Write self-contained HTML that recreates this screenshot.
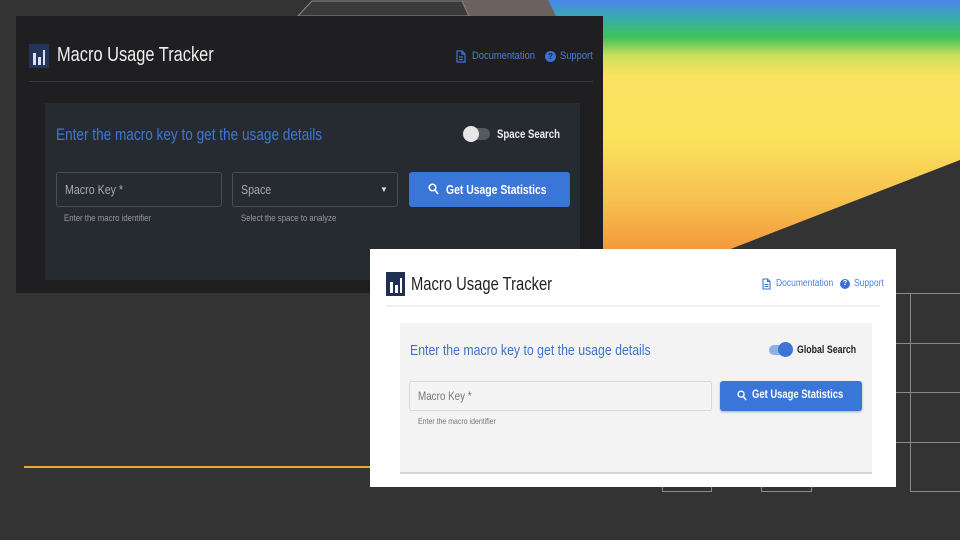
<!DOCTYPE html>
<html><head><meta charset="utf-8"><style>
*{margin:0;padding:0;box-sizing:border-box}
body{width:960px;height:540px;background:#333333;position:relative;overflow:hidden;font-family:"Liberation Sans",sans-serif}
.abs{position:absolute}
.grad{position:absolute;left:0;top:0;width:960px;height:540px}
.dark{left:16px;top:16px;width:587px;height:277px;background:#1f1f21}
.light{left:370px;top:249px;width:526px;height:238px;background:#fff}
.n{white-space:nowrap;transform-origin:left}
</style></head><body>
<svg class="grad" width="960" height="540">
<defs><linearGradient id="g" x1="0" y1="0" x2="0" y2="250" gradientUnits="userSpaceOnUse">
<stop offset="0" stop-color="#4a86e8"/><stop offset="0.07" stop-color="#3aaab0"/><stop offset="0.15" stop-color="#3cc35a"/><stop offset="0.22" stop-color="#c9df5a"/><stop offset="0.3" stop-color="#fae360"/><stop offset="0.55" stop-color="#fce35e"/><stop offset="0.8" stop-color="#f7c04f"/><stop offset="1" stop-color="#f29a3c"/></linearGradient></defs>
<polygon points="548,0 960,0 960,160 728,250 560,250" fill="url(#g)"/>
<polygon points="462,0 548,0 556,16 469,16" fill="#6b625d"/>
<polygon points="298,16 312,1 462,1 469,16" fill="#3a3a3a" stroke="#8a8a8a" stroke-width="1"/>
<line x1="24" y1="467" x2="372" y2="467" stroke="#e9a840" stroke-width="2"/>
<g stroke="#8a8a8a" stroke-width="1" fill="none">
<line x1="896" y1="293.5" x2="960" y2="293.5"/><line x1="896" y1="343.5" x2="960" y2="343.5"/>
<line x1="896" y1="392.5" x2="960" y2="392.5"/><line x1="896" y1="442.5" x2="960" y2="442.5"/>
<line x1="910" y1="491.5" x2="960" y2="491.5"/><line x1="910.5" y1="293" x2="910.5" y2="491"/>
<polyline points="662.5,487 662.5,491.5 711.5,491.5 711.5,487"/>
<polyline points="761.5,487 761.5,491.5 811.5,491.5 811.5,487"/>
</g>
</svg>

<div class="abs dark">
 <div class="abs" style="left:13px;top:28px;width:20px;height:24px;background:#24335a"></div>
 <div class="abs" style="left:17px;top:37px;width:3px;height:12px;background:#dde"></div>
 <div class="abs" style="left:22px;top:41px;width:3px;height:8px;background:#dde"></div>
 <div class="abs" style="left:27px;top:34px;width:2px;height:15px;background:#dde"></div>
 <div class="abs n" style="left:41px;top:28px;color:#f0f0f0;font-size:20px;transform:scaleX(0.82)">Macro Usage Tracker</div>
 <svg class="abs" style="left:440px;top:34px" width="10" height="13" viewBox="0 0 10 13"><path d="M1 1h5l3 3v8H1z M6 1v3h3 M3 7h4 M3 9.5h4" fill="none" stroke="#3f72d0" stroke-width="1.2"/></svg>
 <div class="abs n" style="left:456px;top:34px;color:#4f7fd8;font-size:11px;transform:scaleX(0.85)">Documentation</div>
 <div class="abs" style="left:529px;top:35px;width:11px;height:11px;border-radius:50%;background:#3c72d6;color:#1f1f21;font-size:8px;text-align:center;line-height:11px;font-weight:bold">?</div>
 <div class="abs n" style="left:544px;top:34px;color:#4f7fd8;font-size:11px;transform:scaleX(0.85)">Support</div>
 <div class="abs" style="left:13px;top:65px;width:564px;height:1px;background:#3a3a3e"></div>
 <div class="abs" style="left:29px;top:87px;width:535px;height:177px;background:#262a31">
  <div class="abs n" style="left:11px;top:22px;color:#3f78d4;font-size:17px;transform:scaleX(0.8)">Enter the macro key to get the usage details</div>
  <div class="abs" style="left:419px;top:25px;width:26px;height:12px;border-radius:6px;background:#55585e"></div>
  <div class="abs" style="left:418px;top:23px;width:16px;height:16px;border-radius:50%;background:#e6e6e6"></div>
  <div class="abs n" style="left:452px;top:24px;color:#eee;font-size:12px;font-weight:bold;transform:scaleX(0.8)">Space Search</div>
  <div class="abs" style="left:11px;top:69px;width:166px;height:35px;border:1px solid #4a4d53;border-radius:3px"></div>
  <div class="abs n" style="left:20px;top:79px;color:#aaa;font-size:13px;transform:scaleX(0.82)">Macro Key *</div>
  <div class="abs n" style="left:19px;top:110px;color:#999;font-size:9.5px;transform:scaleX(0.82)">Enter the macro identifier</div>
  <div class="abs" style="left:187px;top:69px;width:166px;height:35px;border:1px solid #4a4d53;border-radius:3px"></div>
  <div class="abs n" style="left:196px;top:79px;color:#aaa;font-size:13px;transform:scaleX(0.82)">Space</div>
  <div class="abs" style="left:335px;top:82px;color:#ddd;font-size:8px">▼</div>
  <div class="abs n" style="left:196px;top:110px;color:#999;font-size:9.5px;transform:scaleX(0.82)">Select the space to analyze</div>
  <div class="abs" style="left:364px;top:69px;width:161px;height:35px;background:#3a76d8;border-radius:3px"></div>
  <svg class="abs" style="left:383px;top:80px" width="11" height="12" viewBox="0 0 11 12"><circle cx="4.5" cy="4.5" r="3.3" fill="none" stroke="#fff" stroke-width="1.5"/><path d="M7 7l3 4" stroke="#fff" stroke-width="1.6"/></svg>
  <div class="abs n" style="left:401px;top:79px;color:#fff;font-size:13px;font-weight:bold;transform:scaleX(0.8)">Get Usage Statistics</div>
 </div>
</div>

<div class="abs light">
 <div class="abs" style="left:16px;top:23px;width:19px;height:24px;background:#1f2f55"></div>
 <div class="abs" style="left:20px;top:33px;width:3px;height:11px;background:#fff"></div>
 <div class="abs" style="left:25px;top:36px;width:3px;height:8px;background:#fff"></div>
 <div class="abs" style="left:30px;top:29px;width:2px;height:15px;background:#fff"></div>
 <div class="abs n" style="left:41px;top:25px;color:#222;font-size:18px;transform:scaleX(0.82)">Macro Usage Tracker</div>
 <svg class="abs" style="left:392px;top:29px" width="9" height="12" viewBox="0 0 9 12"><path d="M1 1h4.5l2.5 2.5V11H1z M5.5 1v2.5H8 M2.5 6.5h4 M2.5 8.5h4" fill="none" stroke="#3f72d0" stroke-width="1.1"/></svg>
 <div class="abs n" style="left:406px;top:29px;color:#4f7fd8;font-size:10px;transform:scaleX(0.85)">Documentation</div>
 <div class="abs" style="left:470px;top:30px;width:10px;height:10px;border-radius:50%;background:#3c72d6;color:#fff;font-size:7px;text-align:center;line-height:10px;font-weight:bold">?</div>
 <div class="abs n" style="left:484px;top:29px;color:#4f7fd8;font-size:10px;transform:scaleX(0.85)">Support</div>
 <div class="abs" style="left:16px;top:56px;width:494px;height:2px;background:#f0f0f0"></div>
 <div class="abs" style="left:30px;top:74px;width:472px;height:151px;background:#f3f3f3;border-bottom:2px solid #d6d6d6">
  <div class="abs n" style="left:10px;top:19px;color:#3f72c8;font-size:15px;transform:scaleX(0.82)">Enter the macro key to get the usage details</div>
  <div class="abs" style="left:369px;top:22px;width:22px;height:10px;border-radius:5px;background:#8fb0e6"></div>
  <div class="abs" style="left:378px;top:19px;width:15px;height:15px;border-radius:50%;background:#3a76d8"></div>
  <div class="abs n" style="left:397px;top:21px;color:#222;font-size:11px;font-weight:bold;transform:scaleX(0.8)">Global Search</div>
  <div class="abs" style="left:9px;top:58px;width:303px;height:30px;border:1px solid #d8d8d8;border-radius:3px;background:#f4f4f4"></div>
  <div class="abs n" style="left:18px;top:66px;color:#777;font-size:12px;transform:scaleX(0.82)">Macro Key *</div>
  <div class="abs n" style="left:18px;top:93px;color:#777;font-size:8.5px;transform:scaleX(0.82)">Enter the macro identifier</div>
  <div class="abs" style="left:320px;top:58px;width:142px;height:30px;background:#3a76d8;border-radius:3px;box-shadow:0 1px 2px rgba(0,0,0,.3)"></div>
  <svg class="abs" style="left:337px;top:67px" width="10" height="11" viewBox="0 0 11 12"><circle cx="4.5" cy="4.5" r="3.3" fill="none" stroke="#fff" stroke-width="1.5"/><path d="M7 7l3 4" stroke="#fff" stroke-width="1.6"/></svg>
  <div class="abs n" style="left:352px;top:66px;color:#fff;font-size:11.5px;font-weight:bold;transform:scaleX(0.82)">Get Usage Statistics</div>
 </div>
</div>
</body></html>
